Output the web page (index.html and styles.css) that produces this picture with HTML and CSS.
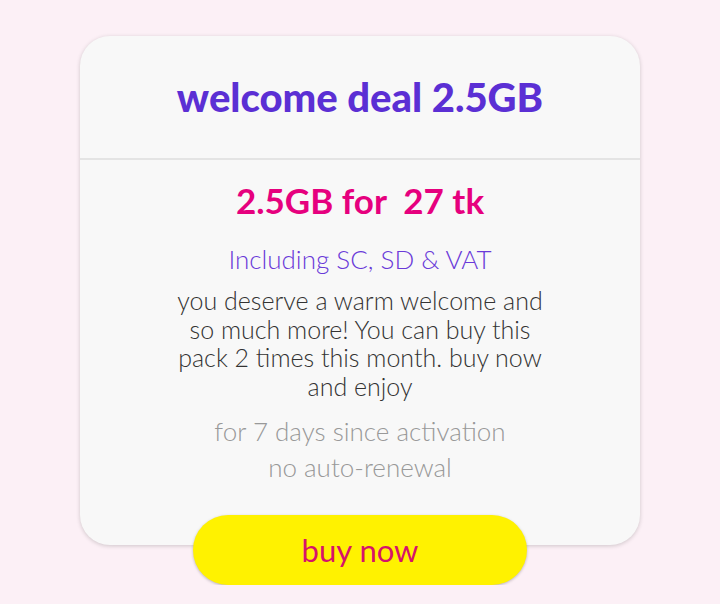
FILE: index.html
```html
<!DOCTYPE html>
<html lang="en">
<head>
    <meta charset="UTF-8">
    <meta name="viewport" content="width=device-width, initial-scale=1.0">
    <title>welcome deal 2.5GB</title>
    <link rel="stylesheet" href="styles.css">
</head>
<body>
    <div class="offer">
        <div class="offer-card">
            <div class="offer-head">
                <h2>welcome deal 2.5GB</h2>
            </div>
            <div class="offer-body">
                <div class="price">2.5GB for&nbsp; 27 tk</div>
                <div class="tax">Including SC, SD &amp; VAT</div>
                <p class="desc">you deserve a warm welcome and so much more! You can buy this pack 2 times this month. buy now and enjoy</p>
                <div class="meta">for 7 days since activation</div>
                <div class="meta">no auto-renewal</div>
            </div>
        </div>
        <button class="buy-btn">buy now</button>
    </div>
</body>
</html>
```

FILE: styles.css
```css
body {
    font-family: Lato, "Noto Sans", sans-serif;
    background-color: #fcf0f6;
    margin: 0;
    padding-top: 36px;
}
.offer {
    display: flex;
    flex-direction: column;
    align-items: center;
}
.offer-card {
    width: 560px;
    background: #f8f8f8;
    border-radius: 30px;
    box-shadow: 0 1px 4px rgba(0, 0, 0, 0.18);
    text-align: center;
}
.offer-head {
    height: 122px;
    display: flex;
    align-items: center;
    justify-content: center;
    border-bottom: 2px solid #e4e4e4;
}
.offer-head h2 {
    margin: 0;
    color: #5b2fd4;
    font-size: 40px;
    font-weight: 900;
}
.offer-body {
    padding: 20px 40px 60px;
}
.price {
    color: #e6007e;
    font-size: 35px;
    font-weight: 700;
    line-height: 40px;
}
.tax {
    margin-top: 22px;
    color: #6a3ad8;
    font-size: 26px;
    font-weight: 300;
    line-height: 34px;
}
.desc {
    margin: 10px auto 0;
    width: 390px;
    color: #333;
    font-size: 25px;
    font-weight: 300;
    line-height: 28.5px;
}
.meta {
    color: #999;
    font-size: 26px;
    font-weight: 300;
    line-height: 36px;
}
.desc + .meta {
    margin-top: 13px;
}
.buy-btn {
    margin-top: -30px;
    width: 334px;
    height: 70px;
    border: none;
    border-radius: 35px;
    background-color: #fff200;
    box-shadow: 0 1px 3px rgba(0, 0, 0, 0.25);
    color: #d6136a;
    font-family: inherit;
    font-size: 31px;
    cursor: pointer;
}
```
